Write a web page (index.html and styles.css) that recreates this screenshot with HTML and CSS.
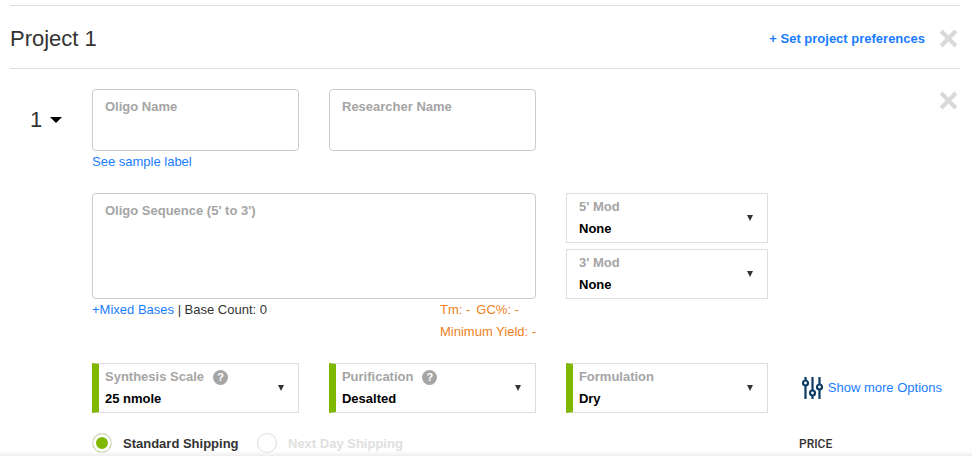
FILE: index.html
```html
<!DOCTYPE html>
<html lang="en">
<head>
<meta charset="utf-8">
<title>Project 1</title>
<link rel="stylesheet" href="styles.css">
</head>
<body>
<main class="page">
  <header class="project-head">
    <h1 class="project-title">Project 1</h1>
    <a class="prefs-link">+ Set project preferences</a>
    <svg class="close-icon" viewBox="0 0 18 18"><path d="M2 2 16 16M16 2 2 16"/></svg>
  </header>
  <section class="item">
    <div class="item-num"><span>1</span><i class="num-caret"></i></div>
    <div class="item-body">
      <div class="name-row">
        <div class="name-col">
          <div class="field field-name">Oligo Name</div>
          <a class="small-link">See sample label</a>
        </div>
        <div class="field field-name">Researcher Name</div>
      </div>
      <div class="seq-row">
        <div class="seq-col">
          <div class="field field-seq">Oligo Sequence (5' to 3')</div>
          <div class="seq-info">
            <div class="seq-left"><a class="small-link">+Mixed Bases</a> | Base Count: 0</div>
            <div class="seq-right"><div>Tm: -<span class="gc">GC%: -</span></div><div>Minimum Yield: -</div></div>
          </div>
        </div>
        <div class="mods">
          <div class="select select-mod"><div class="select-text"><div class="select-label">5' Mod</div><div class="select-value">None</div></div><i class="caret"></i></div>
          <div class="select select-mod"><div class="select-text"><div class="select-label">3' Mod</div><div class="select-value">None</div></div><i class="caret"></i></div>
        </div>
      </div>
      <div class="options-row">
        <div class="select select-green"><div class="select-text"><div class="select-label">Synthesis Scale <b class="help">?</b></div><div class="select-value">25 nmole</div></div><i class="caret"></i></div>
        <div class="select select-green"><div class="select-text"><div class="select-label">Purification <b class="help">?</b></div><div class="select-value">Desalted</div></div><i class="caret"></i></div>
        <div class="select select-green"><div class="select-text"><div class="select-label">Formulation</div><div class="select-value">Dry</div></div><i class="caret"></i></div>
        <a class="more-options">
          <svg class="sliders" viewBox="0 0 20 24"><path d="M3 1v3M3 10v13M10 1v13M10 20v3M17 1v7M17 14v9"/><circle cx="3" cy="7" r="2.5"/><circle cx="10" cy="17" r="2.5"/><circle cx="17" cy="11" r="2.5"/></svg>
          <span class="more-text">Show more Options</span>
        </a>
      </div>
      <div class="ship-row">
        <span class="radio radio-on"></span><span class="ship-label">Standard Shipping</span>
        <span class="radio"></span><span class="ship-label ship-off">Next Day Shipping</span>
        <span class="price-head">PRICE</span>
      </div>
    </div>
    <svg class="close-icon item-close" viewBox="0 0 18 18"><path d="M2 2 16 16M16 2 2 16"/></svg>
  </section>
</main>
<div class="bottom-fade"></div>
</body>
</html>
```
FILE: styles.css
```css
* { box-sizing: border-box; }
html, body { height: 456px; overflow: hidden; }
body { margin: 0; background: #fff; font-family: "Liberation Sans", Arial, sans-serif; font-size: 13px; color: #333; }
.page { margin: 5px 12px 0 10px; }
.project-head { height: 64px; padding-top: 2px; border-top: 1px solid #ddd; border-bottom: 1px solid #ddd; display: flex; align-items: center; }
.project-title { margin: 0; padding-top: 2px; font-size: 22px; font-weight: 400; color: #333; flex: 1; }
.prefs-link { font-size: 13px; font-weight: 700; color: #1a7cff; margin-right: 14px; }
.close-icon { width: 19px; height: 19px; margin-right: 2px; fill: none; stroke: #d9d9d9; stroke-width: 4; flex: none; }
.item { display: flex; padding-top: 20px; position: relative; }
.item-num { width: 82px; padding: 18px 0 0 20px; font-size: 22px; display: flex; align-items: flex-start; color: #333; line-height: 25px; }
.num-caret { width: 0; height: 0; border: 6px solid transparent; border-top: 6px solid #000; border-bottom: 0; margin: 10px 0 0 8px; }
.item-body { flex: none; width: 850px; }
.item-close { position: absolute; top: 22px; right: 0; }
.name-row { display: flex; gap: 30px; height: 104px; }
.name-col { display: flex; flex-direction: column; }
.field { border: 1px solid #ccc; border-radius: 4px; padding: 9px 12px; font-size: 13px; font-weight: 700; color: #a5a5a5; }
.field-name { width: 207px; height: 62px; }
.small-link { font-size: 13px; color: #1a7cff; }
.name-col .small-link { margin-top: 3px; }
.seq-row { display: flex; gap: 30px; height: 170px; }
.seq-col { width: 444px; }
.field-seq { height: 106px; }
.seq-info { display: flex; justify-content: space-between; font-size: 13px; color: #333; }
.seq-left { line-height: 16px; padding-top: 3px; }
.seq-right { width: 96px; color: #ee7f1c; line-height: 22px; white-space: nowrap; }
.gc { margin-left: 6px; }
.mods { width: 202px; display: flex; flex-direction: column; gap: 6px; }
.select { border: 1px solid #ddd; height: 50px; display: flex; align-items: center; }
.select-text { flex: 1; }
.select-mod { padding: 0 14px 0 12px; }
.select-label { font-size: 13px; font-weight: 700; color: #a5a5a5; line-height: 22px; display: flex; align-items: center; gap: 9px; }
.select-value { font-size: 13px; font-weight: 700; color: #000; line-height: 22px; }
.caret { width: 0; height: 0; border: 3.5px solid transparent; border-top: 6px solid #333; border-bottom: 0; flex: none; }
.options-row { display: flex; align-items: center; gap: 30px; }
.select-green { width: 207px; border-left: 7px solid #80b800; padding: 0 14px 0 6px; }
.select-green:nth-child(3) { width: 202px; }
.help { width: 15px; height: 15px; border-radius: 50%; background: #a5a5a5; color: #fff; font-size: 11px; line-height: 15px; text-align: center; display: inline-block; }
.more-options { display: flex; align-items: center; gap: 5px; color: #1a7cff; font-size: 13px; margin-left: 4px; white-space: nowrap; }
.more-text { padding-bottom: 2px; }
.sliders { width: 21px; height: 24px; fill: #fff; stroke: #0d3c66; stroke-width: 2.2; flex: none; }
.ship-row { display: flex; align-items: center; height: 20px; margin-top: 20px; white-space: nowrap; }
.radio { width: 20px; height: 20px; border: 1px solid #ddd; border-radius: 50%; flex: none; background: #fff; }
.radio-on { background: #80b800; box-shadow: inset 0 0 0 3px #fff; }
.ship-label { font-size: 13px; font-weight: 700; color: #333; margin-left: 11px; width: 134px; }
.ship-off { color: #e0e0e0; }
.price-head { margin-left: 377px; padding-top: 1px; font-size: 12px; color: #333; font-family: Roboto, "Liberation Sans", sans-serif; font-weight: 500; }
.bottom-fade { position: fixed; left: 0; right: 0; bottom: 0; height: 5px; background: linear-gradient(rgba(238,238,238,0), #eee); }
```
